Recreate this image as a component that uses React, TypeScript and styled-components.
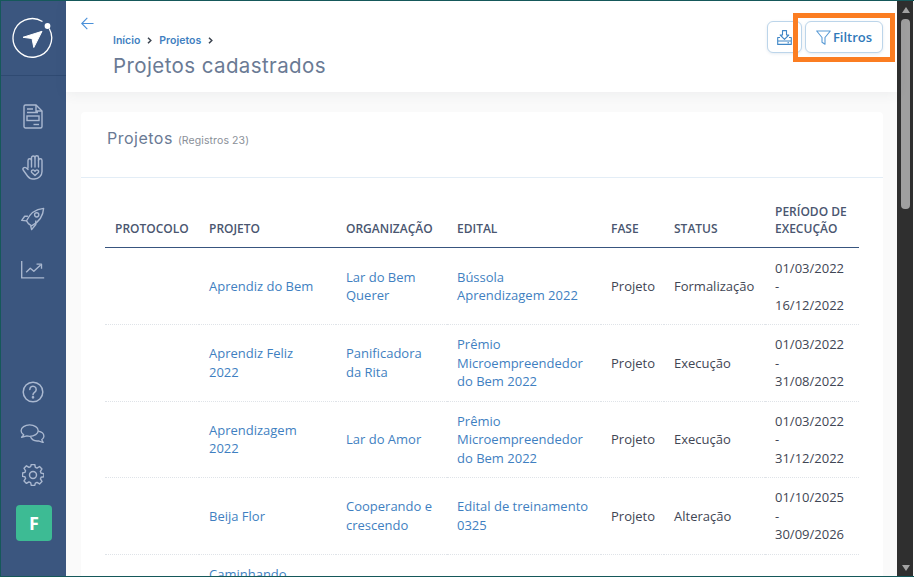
import type { FC } from 'react'
import styled, { createGlobalStyle } from 'styled-components'

const GlobalStyle = createGlobalStyle`
  html, body {
    margin: 0;
    padding: 0;
    height: 100%;
    overflow: hidden;
    background: #fff;
  }
  * {
    box-sizing: border-box;
  }
`

interface Row {
  projeto: string
  organizacao: string
  edital: string
  fase: string
  status: string
  inicio: string
  fim: string
}

const rows: Row[] = [
  {
    projeto: 'Aprendiz do Bem',
    organizacao: 'Lar do Bem Querer',
    edital: 'Bússola Aprendizagem 2022',
    fase: 'Projeto',
    status: 'Formalização',
    inicio: '01/03/2022',
    fim: '16/12/2022',
  },
  {
    projeto: 'Aprendiz Feliz 2022',
    organizacao: 'Panificadora da Rita',
    edital: 'Prêmio Microempreendedor do Bem 2022',
    fase: 'Projeto',
    status: 'Execução',
    inicio: '01/03/2022',
    fim: '31/08/2022',
  },
  {
    projeto: 'Aprendizagem 2022',
    organizacao: 'Lar do Amor',
    edital: 'Prêmio Microempreendedor do Bem 2022',
    fase: 'Projeto',
    status: 'Execução',
    inicio: '01/03/2022',
    fim: '31/12/2022',
  },
  {
    projeto: 'Beija Flor',
    organizacao: 'Cooperando e crescendo',
    edital: 'Edital de treinamento 0325',
    fase: 'Projeto',
    status: 'Alteração',
    inicio: '01/10/2025',
    fim: '30/09/2026',
  },
  {
    projeto: 'Caminhando juntos para um futuro do bem em 2022',
    organizacao: '',
    edital: '',
    fase: '',
    status: '',
    inicio: '',
    fim: '',
  },
]

const columns = [
  { label: 'Protocolo', width: 94 },
  { label: 'Projeto', width: 137 },
  { label: 'Organização', width: 111 },
  { label: 'Edital', width: 154 },
  { label: 'Fase', width: 63 },
  { label: 'Status', width: 101 },
  { label: 'Período de execução', width: 94 },
]

const LogoIcon = () => (
  <svg width="42" height="42" viewBox="0 0 42 42" fill="none">
    <path
      d="M37.200 11.500A19.300 19.300 0 1 1 30.500 4.500"
      stroke="#fff"
      strokeWidth="1.300"
    />
    <circle cx="35.500" cy="9" r="2.900" fill="#fff" />
    <path
      d="M11 20.300 30 14.300 21.800 30.500 20 21.500Z"
      fill="#fff"
      stroke="#fff"
      strokeWidth="1"
      strokeLinejoin="round"
    />
  </svg>
)

const DocIcon = () => (
  <svg width="20" height="25" viewBox="0 0 20 25" fill="none" stroke="currentColor" strokeWidth="1.400">
    <path d="M2.500 1h10.500l6 6v15.500a1.500 1.500 0 0 1-1.500 1.500h-15a1.500 1.500 0 0 1-1.500-1.500V2.500a1.500 1.500 0 0 1 1.500-1.500Z" />
    <path d="M13 1v6h6M4 5h6M4 8.500h11" />
    <rect x="4" y="12" width="12" height="4.500" />
    <path d="M10.500 20.500h5.500" />
  </svg>
)

const HandIcon = () => (
  <svg width="22" height="25" viewBox="0 0 22 25" fill="none" stroke="currentColor" strokeWidth="1.400" strokeLinecap="round" strokeLinejoin="round">
    <path d="M6 13V5.500a1.750 1.750 0 0 1 3.500 0V2.800a1.750 1.750 0 0 1 3.500 0v-.3a1.750 1.750 0 0 1 3.500 0v3a1.750 1.750 0 0 1 3.500 0V16.500a7.500 7.500 0 0 1-7.500 7.500H11c-2.500 0-4-1-5.500-3L1.200 15c-1-1.600 1.200-3.400 2.800-2.200L6 14.500" />
    <path d="M9.500 5.500V12M13 3v9M16.500 5.500V12" />
    <path d="M13 20.500l-3.200-3c-1.400-1.600 1-3.500 2.500-2l.7.700.7-.7c1.500-1.500 3.900.4 2.500 2Z" />
  </svg>
)

const RocketIcon = () => (
  <svg width="24" height="24" viewBox="0 0 26 26" fill="none" stroke="currentColor" strokeWidth="1.500" strokeLinejoin="round">
    <path d="M8 18 6 15C9 8 15 2.500 24.500 1.500 24 10 19 16.500 11.500 20.500Z" />
    <circle cx="17" cy="8.500" r="2.300" />
    <path d="M7.500 10H4L.8 14.500 6 15M16 14.500V19L11.500 24.500l-1-4" />
  </svg>
)

const ChartIcon = () => (
  <svg width="25" height="18" viewBox="0 0 26 20" fill="none" stroke="currentColor" strokeWidth="1.500" strokeLinejoin="round">
    <path d="M1 0v18.800h25" />
    <path d="M6 12.500l4.500-4.500 4 3.500L22 4.500" />
    <path d="M17.500 3.500h5.500v5" />
  </svg>
)

const HelpIcon = () => (
  <svg width="22" height="22" viewBox="0 0 22 22" fill="none" stroke="currentColor" strokeWidth="1.500" strokeLinecap="round">
    <circle cx="11" cy="11" r="9.800" />
    <path d="M7.800 8.500a3.200 3.200 0 1 1 5 2.600c-1.200.8-1.800 1.300-1.800 2.700" />
    <circle cx="11" cy="16.300" r=".6" fill="currentColor" />
  </svg>
)

const ChatIcon = () => (
  <svg width="25" height="19" viewBox="0 0 26 20" fill="none" stroke="currentColor" strokeWidth="1.400" strokeLinejoin="round">
    <path d="M10 1C5 1 1 3.700 1 7c0 1.800 1.100 3.300 2.800 4.400L1.500 14l5.500-1.400c1 .3 2 .4 3 .4 5 0 9-2.700 9-6s-4-6-9-6Z" />
    <path d="M19 7.500c3.500.7 6 2.800 6 5.300 0 1.500-.9 2.800-2.300 3.800l1.600 2.900-5-1.700c-3.500.4-7-.9-8.500-4.600" />
  </svg>
)

const GearIcon = () => (
  <svg width="22" height="22" viewBox="0 0 24 24" fill="none" stroke="currentColor" strokeWidth="1.600" strokeLinejoin="round">
    <path d="M10 1h4l.7 3.300 1.900.8 2.900-1.800 2.800 2.800-1.800 2.900.8 1.900 3.200.7V15l-3.200.7-.8 1.900 1.800 2.900-2.800 2.800-2.900-1.800-1.900.8L14 25h-4l-.7-3.300-1.900-.8-2.900 1.800-2.800-2.800 1.800-2.900-.8-1.900L0 14.700V10.800l2.700-.7.800-1.900-1.800-2.900 2.800-2.800 2.900 1.800 1.900-.8Z" transform="translate(.6 -.4) scale(.95)" />
    <circle cx="12" cy="12" r="3.800" />
  </svg>
)

const BackIcon = () => (
  <svg width="13" height="13" viewBox="0 0 14 14" fill="none" stroke="#4a90d9" strokeWidth="1.200">
    <path d="M13.500 7H.8M6.800 1 .8 7l6 6" />
  </svg>
)

const CrumbIcon = () => (
  <svg width="5" height="7" viewBox="0 0 5 7" fill="none" stroke="#3c4450" strokeWidth="1.500">
    <path d="M1 .8 3.800 3.500 1 6.200" />
  </svg>
)

const DownloadIcon = () => (
  <svg width="15" height="15" viewBox="0 0 15 15" fill="none" stroke="#3f86c6" strokeWidth="1.100" strokeLinejoin="round">
    <path d="M5.500.6h4v4.400h2.300L7.500 9.300 3.200 5h2.300Z" />
    <path d="M3 7.500H.7v6.900h13.600V7.500H12M1 11h13M10.500 12.700h1.500" />
  </svg>
)

const FilterIcon = () => (
  <svg width="15" height="15" viewBox="0 0 15 15" fill="none" stroke="#5a9bd5" strokeWidth="1.100" strokeLinejoin="round">
    <path d="M.7 1h13.600L9 7.500v6.800l-3-2V7.500Z" />
  </svg>
)

const App: FC = () => (
  <Window>
    <GlobalStyle />
    <Sidebar>
      <LogoBlock>
        <LogoIcon />
      </LogoBlock>
      <NavIcons>
        <NavIcon $height={51}><DocIcon /></NavIcon>
        <NavIcon $height={51}><HandIcon /></NavIcon>
        <NavIcon $height={51}><RocketIcon /></NavIcon>
        <NavIcon $height={51}><ChartIcon /></NavIcon>
      </NavIcons>
      <SideFooter>
        <NavIcon $height={41}><HelpIcon /></NavIcon>
        <NavIcon $height={42}><ChatIcon /></NavIcon>
        <NavIcon $height={41}><GearIcon /></NavIcon>
        <Avatar>F</Avatar>
      </SideFooter>
    </Sidebar>
    <Main>
      <Header>
        <BackButton>
          <BackIcon />
        </BackButton>
        <TitleBlock>
          <Breadcrumb>
            <a>Início</a>
            <CrumbIcon />
            <a>Projetos</a>
            <CrumbIcon />
          </Breadcrumb>
          <Title>Projetos cadastrados</Title>
        </TitleBlock>
        <Actions>
          <ActionButton>
            <DownloadIcon />
          </ActionButton>
          <ActionButton $wide>
            <FilterIcon />
            Filtros
          </ActionButton>
        </Actions>
        <Highlight />
      </Header>
      <Content>
        <Card>
          <CardHead>
            <CardTitle>Projetos</CardTitle>
            <CardCount>(Registros 23)</CardCount>
          </CardHead>
          <TableWrap>
            <Table>
              <colgroup>
                {columns.map(col => (
                  <col key={col.label} width={col.width} />
                ))}
              </colgroup>
              <thead>
                <tr>
                  {columns.map(col => (
                    <Th key={col.label}>{col.label}</Th>
                  ))}
                </tr>
              </thead>
              <tbody>
                {rows.map(row => (
                  <tr key={row.projeto}>
                    <Td />
                    <Td $link>{row.projeto}</Td>
                    <Td $link>{row.organizacao}</Td>
                    <Td $link>{row.edital}</Td>
                    <Td>{row.fase}</Td>
                    <Td>{row.status}</Td>
                    <Td>
                      {row.inicio}
                      {row.inicio && <br />}
                      {row.inicio && '-'}
                      {row.inicio && <br />}
                      {row.fim}
                    </Td>
                  </tr>
                ))}
              </tbody>
            </Table>
          </TableWrap>
        </Card>
      </Content>
    </Main>
    <ScrollBar>
      <ScrollArrow />
      <ScrollThumb />
      <ScrollArrow $down />
    </ScrollBar>
  </Window>
)

export default App

const Window = styled.div`
  width: 914px;
  height: 577px;
  display: flex;
  overflow: hidden;
  border-top: 1px solid #15585a;
  border-left: 1px solid #15585a;
  border-bottom: 1px solid #15585a;
  font-family: 'Open Sans', 'Liberation Sans', sans-serif;
`

const Sidebar = styled.aside`
  width: 65px;
  flex: none;
  display: flex;
  flex-direction: column;
  background: #3b567f;
  color: #aab8d0;
`

const LogoBlock = styled.div`
  height: 75px;
  flex: none;
  display: flex;
  align-items: center;
  justify-content: center;
  padding-right: 2px;
  border-bottom: 1px solid #2f4a72;
`

const NavIcons = styled.nav`
  display: flex;
  flex-direction: column;
  padding-top: 15px;
`

const NavIcon = styled.div<{ $height: number }>`
  height: ${p => p.$height}px;
  display: flex;
  align-items: center;
  justify-content: center;
  padding-right: 2px;
`

const SideFooter = styled.div`
  margin-top: auto;
  display: flex;
  flex-direction: column;
  padding-bottom: 35px;
`

const Avatar = styled.div`
  width: 36px;
  height: 36px;
  margin: 10px 0 0 15px;
  border-radius: 4px;
  background: #3dbb94;
  color: #fff;
  display: flex;
  align-items: center;
  justify-content: center;
  font-size: 18px;
  font-weight: 700;
`

const Main = styled.main`
  flex: 1;
  min-width: 0;
  display: flex;
  flex-direction: column;
  background: #fafafa;
`

const Header = styled.header`
  position: relative;
  height: 91px;
  flex: none;
  display: flex;
  background: #fff;
  box-shadow: 0 2px 12px rgba(60, 70, 90, 0.07);
  z-index: 1;
`

const BackButton = styled.div`
  margin: 16px 0 0 15px;
  height: 14px;
  line-height: 0;
`

const TitleBlock = styled.div`
  margin: 33px 0 0 19px;
  display: flex;
  flex-direction: column;
`

const Breadcrumb = styled.div`
  display: flex;
  align-items: center;
  gap: 7px;
  height: 13px;
  font-family: Inter, 'Noto Sans', sans-serif;
  font-size: 10.500px;
  font-weight: 600;
  color: #3f7fc1;
`

const Title = styled.h1`
  margin: 6px 0 0;
  font-family: Inter, 'Noto Sans', sans-serif;
  font-size: 20.500px;
  line-height: 26px;
  font-weight: 400;
  letter-spacing: 0.4px;
  color: #6a7a94;
`

const Actions = styled.div`
  margin: 20px 14px 0 auto;
  display: flex;
  gap: 3px;
  align-items: flex-start;
`

const ActionButton = styled.button<{ $wide?: boolean }>`
  width: ${p => (p.$wide ? 78 : 35)}px;
  height: 32px;
  padding: 0;
  display: flex;
  align-items: center;
  justify-content: center;
  gap: 2px;
  background: #fff;
  border: 1px solid #bcd5ea;
  border-radius: 6px;
  box-shadow: 0 1px 3px rgba(80, 120, 160, 0.15);
  font-family: 'Open Sans', sans-serif;
  font-size: 13px;
  font-weight: 600;
  color: #2f79b9;
`

const Highlight = styled.div`
  position: absolute;
  top: 12px;
  left: 727px;
  width: 102px;
  height: 49px;
  border: 5px solid #fb7d21;
  pointer-events: none;
`

const Content = styled.div`
  flex: 1;
  min-height: 0;
  overflow: hidden;
  padding: 20px 14px 0 15px;
`

const Card = styled.section`
  background: #fff;
  border-radius: 4px 4px 0 0;
  min-height: 600px;
`

const CardHead = styled.div`
  height: 66px;
  padding: 16px 0 0 26px;
  display: flex;
  align-items: baseline;
  gap: 5px;
  border-bottom: 1px solid #e3edf6;
`

const CardTitle = styled.h2`
  margin: 0;
  font-family: Inter, 'Noto Sans', sans-serif;
  font-size: 16px;
  line-height: 20px;
  font-weight: 400;
  letter-spacing: 0.5px;
  color: #6a7a94;
`

const CardCount = styled.span`
  font-family: Inter, 'Noto Sans', sans-serif;
  font-size: 10.500px;
  letter-spacing: 0.1px;
  color: #8a8f98;
`

const TableWrap = styled.div`
  padding: 25px 24px 0;
`

const Table = styled.table`
  width: 754px;
  table-layout: fixed;
  border-collapse: collapse;
`

const Th = styled.th`
  padding: 0 10px 10px;
  vertical-align: bottom;
  text-align: left;
  font-size: 12px;
  line-height: 17px;
  font-weight: 600;
  text-transform: uppercase;
  color: #4a5670;
  border-bottom: 1px solid #38557f;
`

const Td = styled.td<{ $link?: boolean }>`
  padding: 10px;
  vertical-align: middle;
  font-size: 13px;
  line-height: 18.500px;
  color: ${p => (p.$link ? '#3f7fc1' : '#3f4654')};
  border-bottom: 1px dotted #dfe3e8;

  tbody tr:first-child & {
    padding-top: 10.500px;
  }
`

const ScrollBar = styled.div`
  width: 16px;
  flex: none;
  margin-right: 1px;
  padding: 6px 3px 5px 4px;
  display: flex;
  flex-direction: column;
  align-items: center;
  background: #2f2f2f;
`

const ScrollArrow = styled.div<{ $down?: boolean }>`
  flex: none;
  width: 0;
  height: 0;
  border-left: 4.500px solid transparent;
  border-right: 4.500px solid transparent;
  ${p =>
    p.$down
      ? 'border-top: 6px solid #a3a3a3; margin-top: auto;'
      : 'border-bottom: 6px solid #a3a3a3;'}
`

const ScrollThumb = styled.div`
  width: 9px;
  height: 190px;
  margin-top: 6px;
  border-radius: 4px;
  background: #9f9f9f;
`
